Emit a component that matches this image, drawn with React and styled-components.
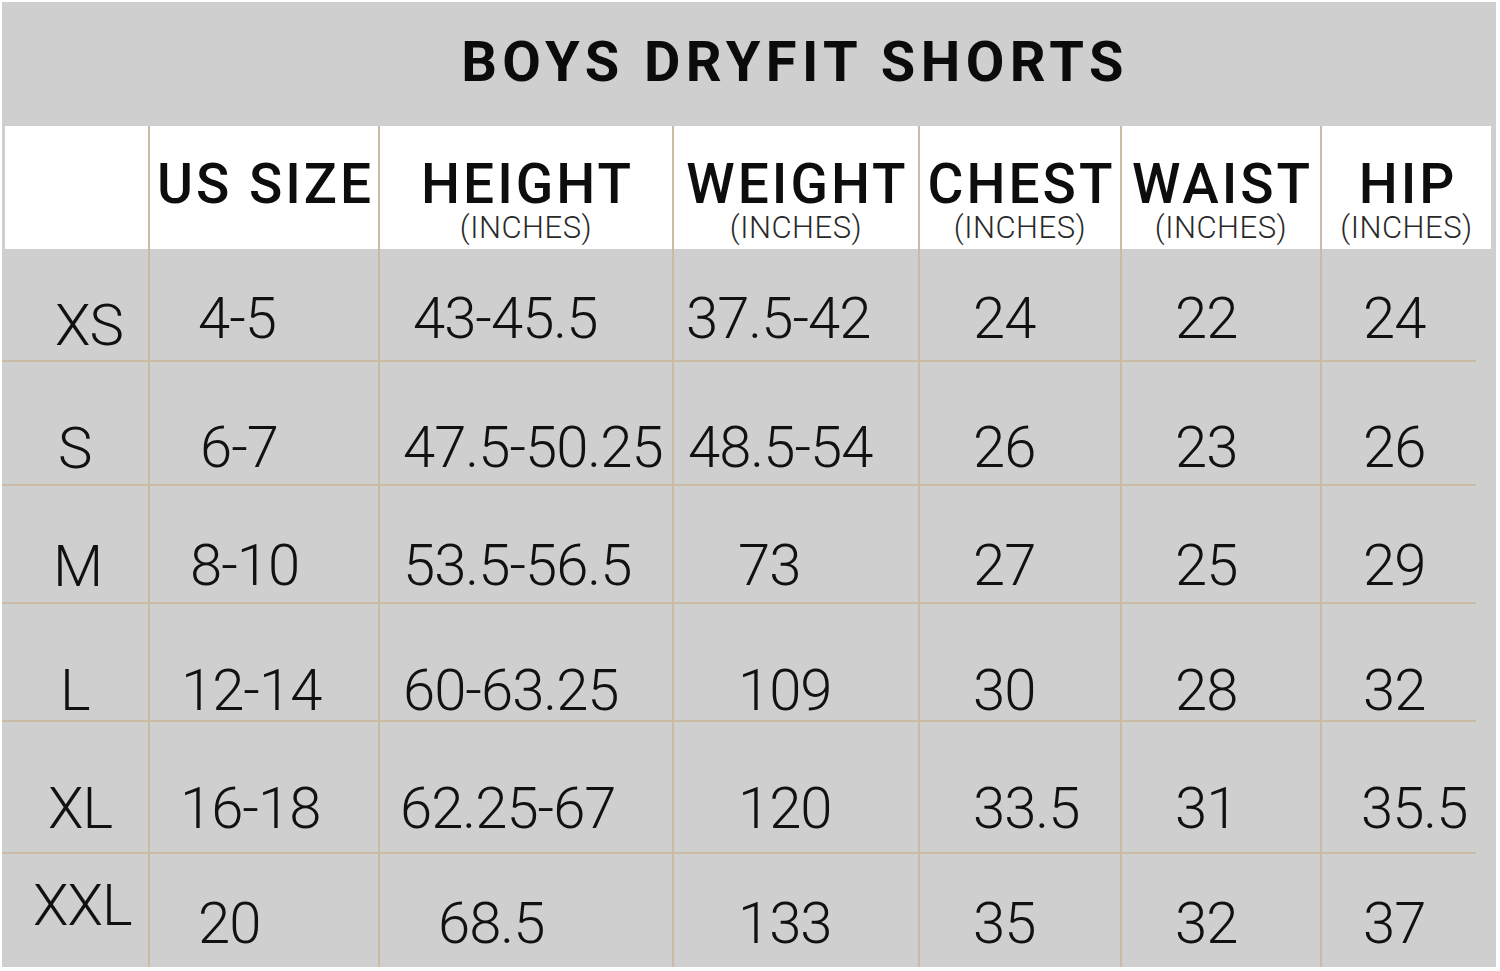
import React from 'react';
import styled, { createGlobalStyle } from 'styled-components';

const GlobalStyle = createGlobalStyle`
  html, body {
    margin: 0;
    padding: 0;
    background: #ffffff;
  }
  body {
    font-family: Roboto, "Liberation Sans", sans-serif;
    color: #111;
  }
`;

const columns = [146, 230, 294, 246, 202, 200, 176];

const headers = [
  { label: 'US SIZE' },
  { label: 'HEIGHT', unit: '(INCHES)' },
  { label: 'WEIGHT', unit: '(INCHES)' },
  { label: 'CHEST', unit: '(INCHES)' },
  { label: 'WAIST', unit: '(INCHES)' },
  { label: 'HIP', unit: '(INCHES)' },
];

// x = text offset from the cell's left line, base = baseline from row top
const rows = [
  {
    size: 'XS', h: 111, sizeX: 53, sizeBase: 96, base: 89,
    cells: [['4-5', 50], ['43-45.5', 35], ['37.5-42', 14], ['24', 55], ['22', 55], ['24', 43]],
  },
  {
    size: 'S', h: 124, sizeX: 56, sizeBase: 108, base: 107,
    cells: [['6-7', 52], ['47.5-50.25', 25], ['48.5-54', 16], ['26', 55], ['23', 55], ['26', 43]],
  },
  {
    size: 'M', h: 118, sizeX: 51, sizeBase: 102, base: 101,
    cells: [['8-10', 42], ['53.5-56.5', 25], ['73', 66], ['27', 55], ['25', 55], ['29', 43]],
  },
  {
    size: 'L', h: 118, sizeX: 58, sizeBase: 108, base: 108,
    cells: [['12-14', 33], ['60-63.25', 25], ['109', 66], ['30', 55], ['28', 55], ['32', 43]],
  },
  {
    size: 'XL', h: 132, sizeX: 46, sizeBase: 108, base: 108,
    cells: [['16-18', 32], ['62.25-67', 22], ['120', 66], ['33.5', 55], ['31', 55], ['35.5', 41]],
  },
  {
    size: 'XXL', h: 115, sizeX: 31, sizeBase: 73, base: 91,
    cells: [['20', 50], ['68.5', 60], ['133', 66], ['35', 55], ['32', 55], ['37', 43]],
  },
];

const FS = 58;
const ASC = 0.841 * FS;

const Page = styled.div`
  padding: 2px;
  width: 1494px;
`;

const Chart = styled.div`
  background: #cfcfcf;
  width: 1494px;
  height: 965px;
`;

const TitleBar = styled.div`
  height: 124px;
  display: flex;
  justify-content: center;
  align-items: flex-start;
  box-sizing: border-box;
  padding-top: 32px;
  padding-left: 92px;
`;

const Title = styled.h1`
  margin: 0;
  font-family: Roboto, "Liberation Sans", sans-serif;
  font-weight: 700;
  font-size: 56px;
  line-height: 1;
  letter-spacing: 5.4px;
  color: #0b0b0b;
`;

const Table = styled.div`
  display: grid;
  grid-template-columns: ${columns.map((c) => `${c}px`).join(' ')};
`;

const HeadCell = styled.div`
  height: 123px;
  box-sizing: border-box;
  background: #ffffff;
  display: flex;
  flex-direction: column;
  align-items: center;
  padding-top: 35px;
  border-left: ${(p) => (p.$first ? 'none' : '2px solid #c9bba4')};
  margin-left: ${(p) => (p.$first ? '3px' : '0')};
  margin-right: ${(p) => (p.$last ? '5px' : '0')};
`;

const HeadLabel = styled.div`
  font-family: Roboto, "Liberation Sans", sans-serif;
  font-weight: 500;
  font-size: 55px;
  line-height: 46px;
  letter-spacing: 3px;
  margin-right: -3px;
  color: #0d0d0d;
  white-space: nowrap;
`;

const HeadUnit = styled.div`
  font-family: Roboto, "Liberation Sans", sans-serif;
  font-weight: 300;
  font-size: 31px;
  line-height: 28px;
  letter-spacing: 0.5px;
  margin-top: 7px;
  color: #2a2a2a;
  white-space: nowrap;
`;

const Cell = styled.div`
  height: ${(p) => p.$h}px;
  box-sizing: border-box;
  padding-left: ${(p) => p.$x}px;
  padding-top: ${(p) => p.$pt}px;
  border-left: ${(p) => (p.$first ? 'none' : '2px solid #c9bba4')};
  background-image: ${(p) =>
    p.$line ? 'linear-gradient(#c9bba4, #c9bba4)' : 'none'};
  background-repeat: no-repeat;
  background-position: left top;
  background-size: ${(p) => (p.$last ? 'calc(100% - 20px) 2px' : '100% 2px')};
`;

const Value = styled.span`
  display: block;
  font-family: Roboto, "Liberation Sans", sans-serif;
  font-weight: 300;
  font-size: ${FS}px;
  line-height: 1;
  letter-spacing: -1px;
  color: #111;
  white-space: nowrap;
`;

export default function App() {
  return (
    <Page>
      <GlobalStyle />
      <Chart>
        <TitleBar>
          <Title>BOYS DRYFIT SHORTS</Title>
        </TitleBar>
        <Table>
          <HeadCell $first />
          {headers.map((hd, i) => (
            <HeadCell key={hd.label} $last={i === headers.length - 1}>
              <HeadLabel>{hd.label}</HeadLabel>
              {hd.unit && <HeadUnit>{hd.unit}</HeadUnit>}
            </HeadCell>
          ))}
          {rows.map((row, r) => (
            <React.Fragment key={row.size}>
              <Cell
                $first
                $h={row.h}
                $x={row.sizeX}
                $pt={row.sizeBase - ASC}
                $line={r > 0}
              >
                <Value>{row.size}</Value>
              </Cell>
              {row.cells.map(([text, x], c) => (
                <Cell
                  key={c}
                  $h={row.h}
                  $x={x - 2}
                  $pt={row.base - ASC}
                  $line={r > 0}
                  $last={c === row.cells.length - 1}
                >
                  <Value>{text}</Value>
                </Cell>
              ))}
            </React.Fragment>
          ))}
        </Table>
      </Chart>
    </Page>
  );
}
